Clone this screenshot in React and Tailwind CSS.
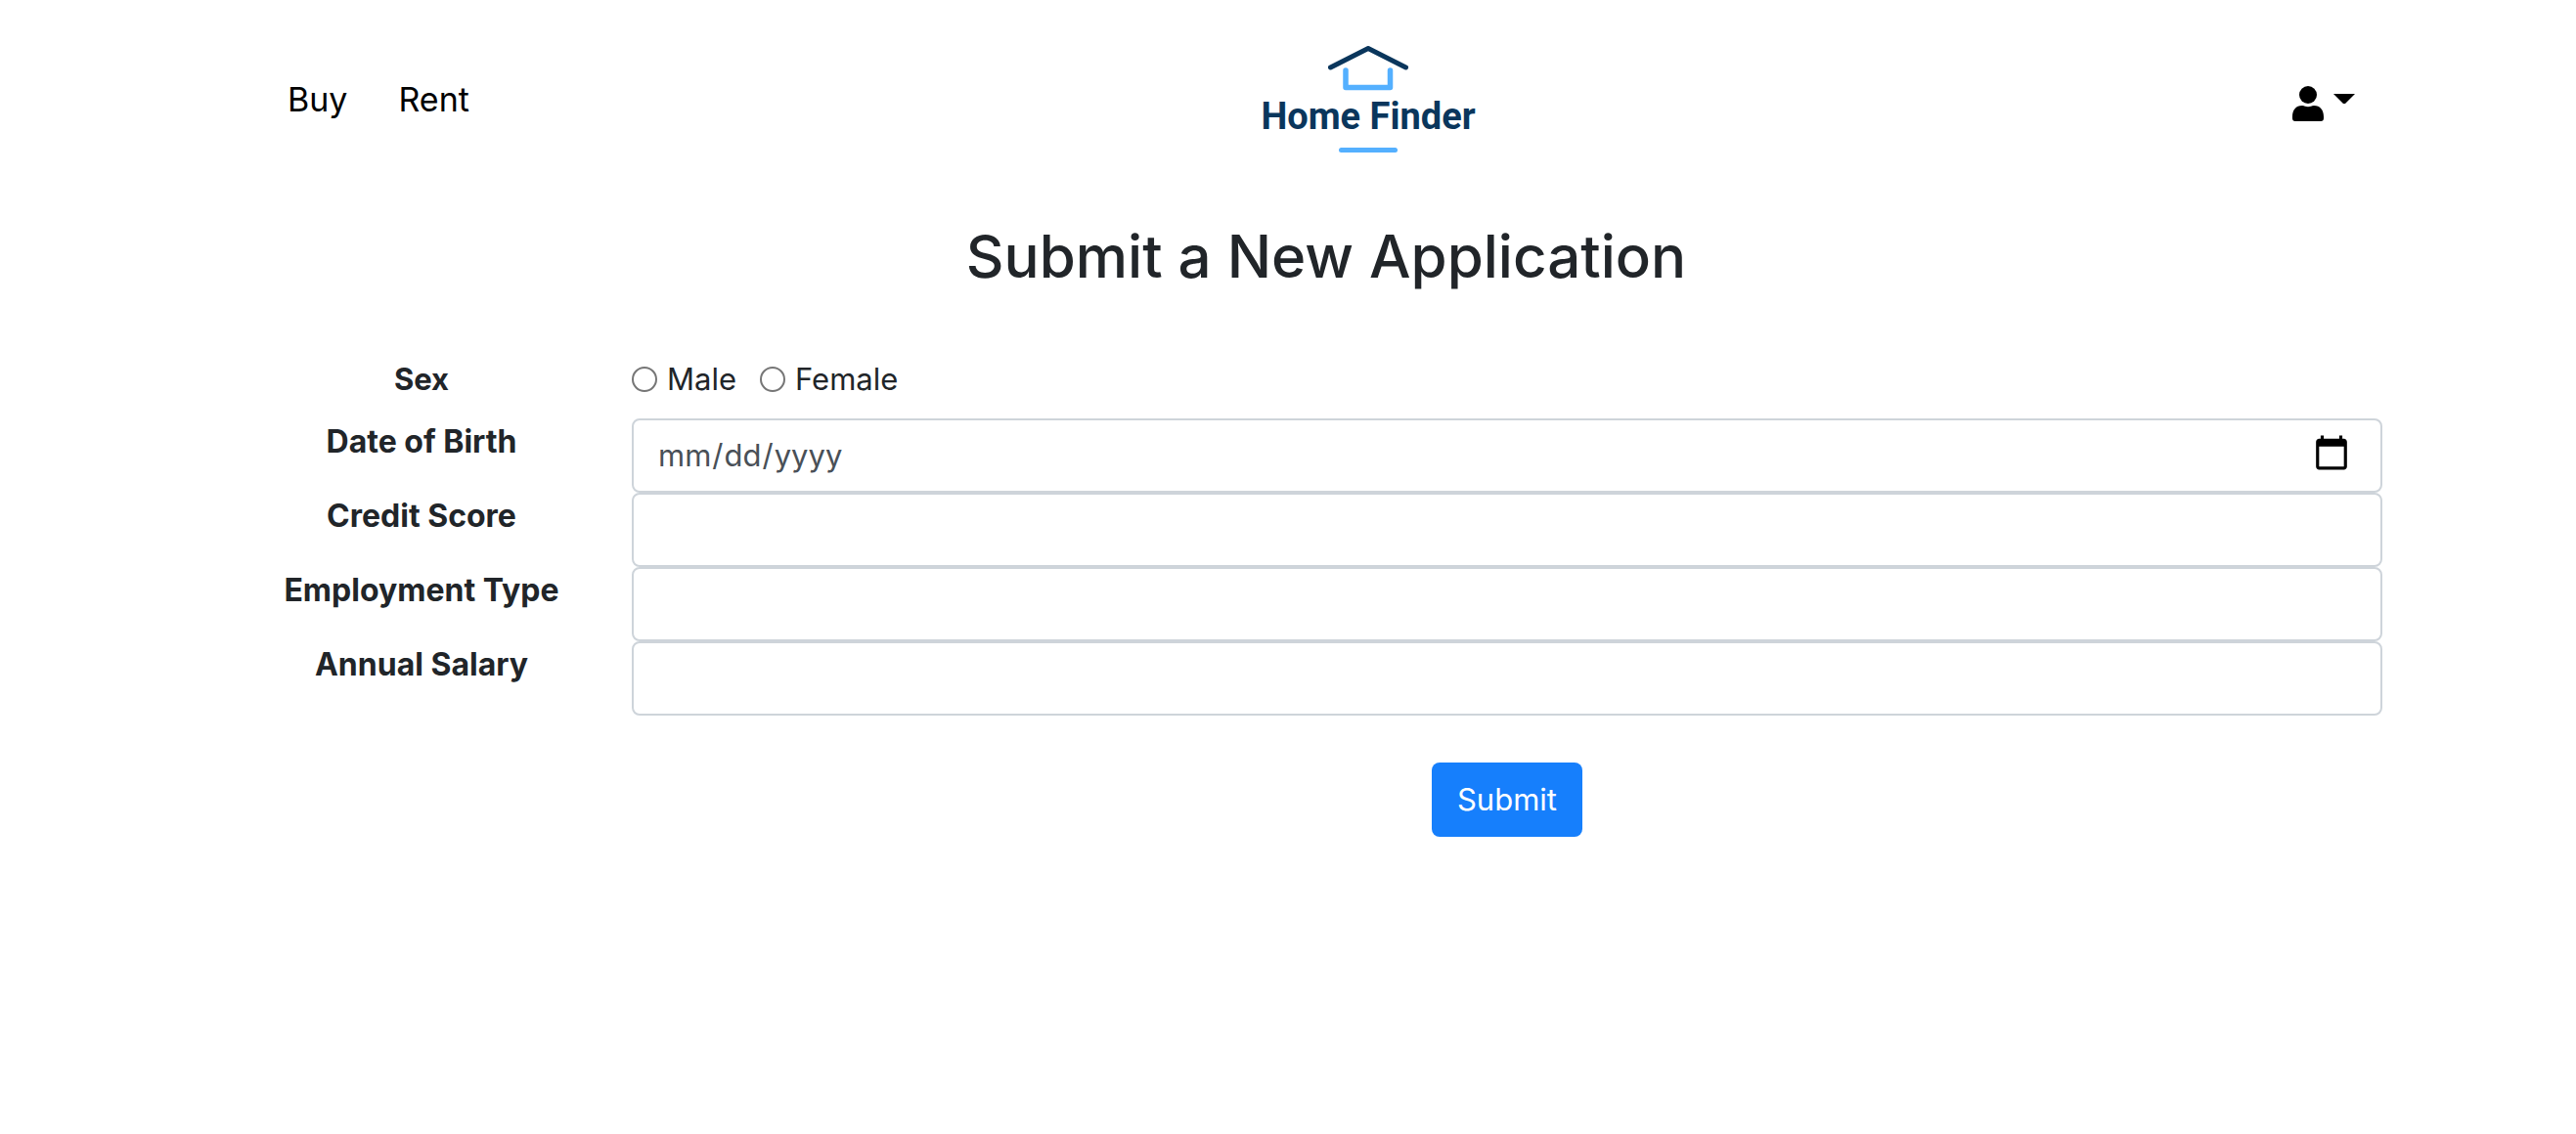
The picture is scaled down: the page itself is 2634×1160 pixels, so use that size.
import React from "react";

function Logo() {
  return (
    <a href="#home" aria-label="Home Finder" className="flex w-56 flex-col items-center text-[#0a365c]">
      <svg viewBox="0 0 84 48" className="h-12 w-[84px]" fill="none" strokeLinecap="round" strokeLinejoin="round" aria-hidden="true">
        <path d="M3.5 22 L42 2.5 L80.500 22" stroke="#0a365c" strokeWidth="5" />
        <path d="M19 25 V42.500 H64.500 V25" stroke="#54b0ff" strokeWidth="5.500" />
      </svg>
      <span className="whitespace-nowrap font-[Roboto,sans-serif] text-[38px] leading-12 font-bold">
        Home Finder
      </span>
      <span className="mt-2 h-[5px] w-[60px] rounded-full bg-[#54b0ff]" />
    </a>
  );
}

function Header() {
  return (
    <header className="grid grid-cols-3 items-center pt-[47px] text-black">
      <nav className="flex gap-[52px] pl-12 text-[34px] leading-[56px]">
        <a href="#buy">Buy</a>
        <a href="#rent">Rent</a>
      </nav>
      <div className="flex justify-center pl-[86px]">
        <Logo />
      </div>
      <div className="flex justify-end pr-[58px]">
        <button type="button" aria-label="Account menu" className="flex items-start gap-2.5 pt-2">
          <svg viewBox="0 0 32 36" className="h-9 w-8" fill="currentColor" aria-hidden="true">
            <circle cx="16" cy="9" r="9" />
            <path d="M0 31.500 C0 24.500 3.500 20 10 20 C12.500 20 13.500 21.300 16 21.300 C18.500 21.300 19.500 20 22 20 C28.500 20 32 24.500 32 31.500 V33 C32 35 31 36 29 36 H3 C1 36 0 35 0 33 Z" />
          </svg>
          <svg viewBox="0 0 22 10" className="mt-2 h-2.5 w-[22px]" fill="currentColor" aria-hidden="true">
            <path d="M0 0 H22 L12 10 H10 Z" />
          </svg>
        </button>
      </div>
    </header>
  );
}

const fields = [
  { id: "dob", label: "Date of Birth", type: "date" },
  { id: "credit", label: "Credit Score", type: "text" },
  { id: "employment", label: "Employment Type", type: "text" },
  { id: "salary", label: "Annual Salary", type: "text" },
];

function RadioOption({ value, label }) {
  return (
    <label className="flex items-center gap-2.5">
      <input
        type="radio"
        name="sex"
        value={value}
        className="size-[26px] appearance-none rounded-full border-2 border-[#767676] bg-white checked:border-8 checked:border-[#167ffc]"
      />
      {label}
    </label>
  );
}

export default function App() {
  return (
    <div className="bg-white pr-[168px] pl-[246px] font-[Inter,sans-serif] text-[31px] leading-12 text-[#212529]">
      <Header />
      <main className="pt-17">
        <h1 className="text-center text-[60px] leading-[76px] font-medium">Submit a New Application</h1>
        <form className="pt-16">
          <div role="radiogroup" aria-labelledby="sex-label" className="mb-4 grid grid-cols-12">
            <span id="sex-label" className="col-span-2 text-center font-bold">Sex</span>
            <div className="col-span-10 flex gap-6 px-[30px]">
              <RadioOption value="male" label="Male" />
              <RadioOption value="female" label="Female" />
            </div>
          </div>
          {fields.map((f) => (
            <div key={f.id} className="grid grid-cols-12">
              <label htmlFor={f.id} className="col-span-2 text-center text-[32px] font-bold whitespace-nowrap">{f.label}</label>
              <div className="col-span-10 px-[30px]">
                <input
                  id={f.id}
                  type={f.type}
                  className="block h-[76px] w-full rounded-lg border-2 border-[#ced4da] bg-white px-6 text-[#495057] [&::-webkit-calendar-picker-indicator]:mr-1 [&::-webkit-calendar-picker-indicator]:mb-1 [&::-webkit-calendar-picker-indicator]:size-10"
                />
              </div>
            </div>
          ))}
          <div className="mt-12 grid grid-cols-12">
            <div className="col-span-10 col-start-3 flex justify-center">
              <button type="submit" className="h-[76px] rounded-lg bg-[#167ffc] px-[26px] text-white">Submit</button>
            </div>
          </div>
        </form>
      </main>
    </div>
  );
}
